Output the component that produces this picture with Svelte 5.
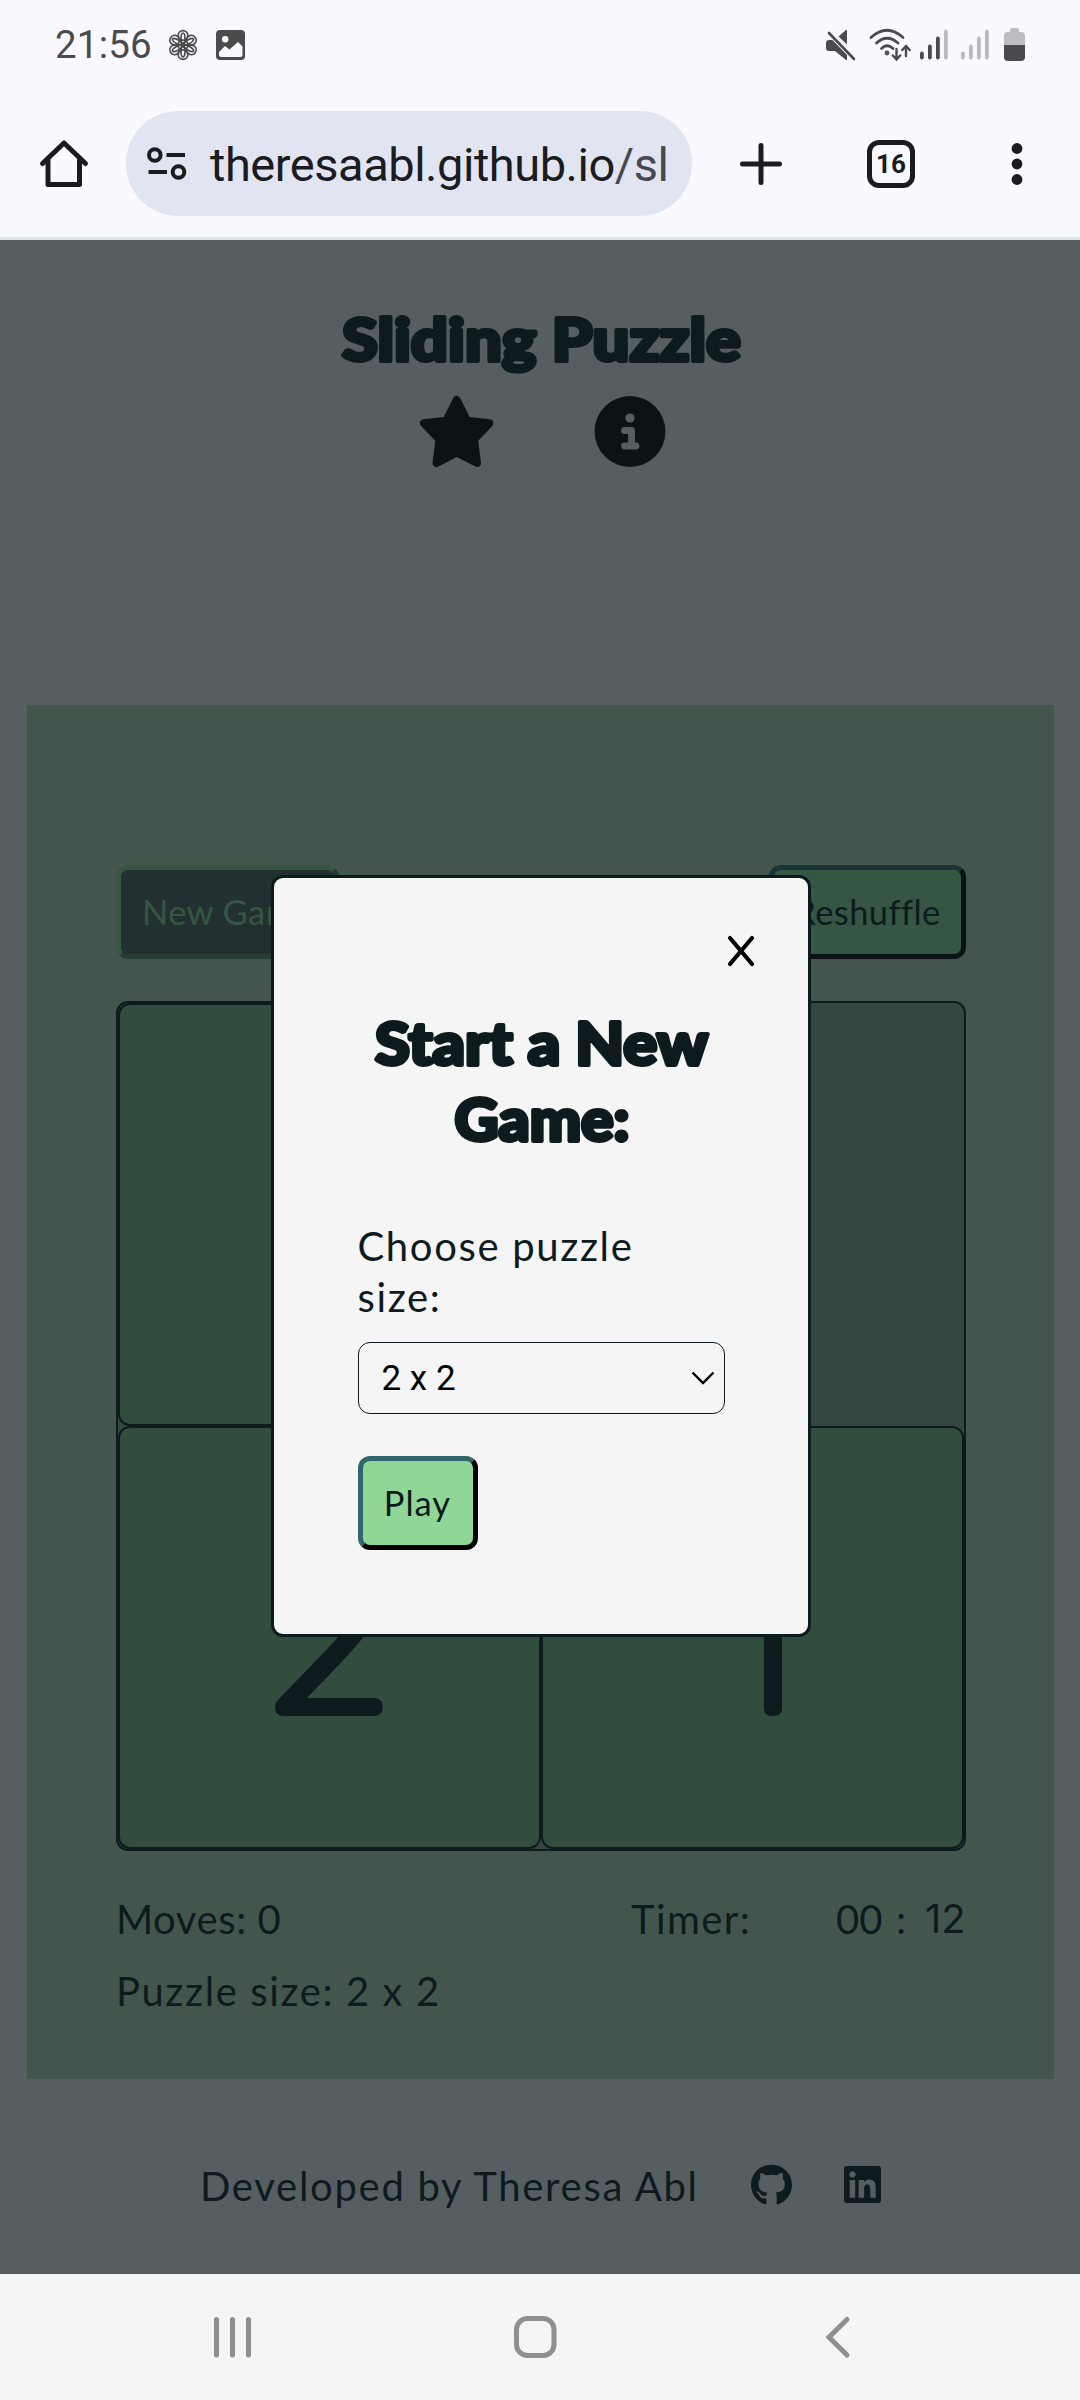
<script>
  const time = '21:56';
  const tiles = [
    { label: '', x: 209, stretch: 1 },
    null,
    { label: '2', x: 208.5, stretch: 1.14 },
    { label: '1', x: 219, stretch: 1 },
  ];
  const signalBars = [8, 15, 23, 30];
</script>

<div class="screen">
  <header class="status">
    <span class="clock">{time}</span>
    <svg class="flower" width="30" height="32" viewBox="-15 -16 30 32">
      {#each [0, 60, 120, 180, 240, 300] as angle}
        <g transform="rotate({angle})">
          <circle cx="0" cy="-9.6" r="4.8" />
          <ellipse cx="0" cy="-6" rx="2" ry="6" />
        </g>
      {/each}
    </svg>
    <svg class="photo" width="29" height="30" viewBox="0 0 29 30">
      <rect width="29" height="30" rx="4" fill="#4b4b4d" />
      <circle cx="9.2" cy="9.3" r="3.2" fill="#faf9ff" />
      <path d="M3 22l6-6 4.500 3.500 8.500-7.500 4.500 4.500V25q0 2-2 2H5q-2 0-2-2z" fill="#faf9ff" />
    </svg>
    <div class="indicators">
      <svg width="30" height="32" viewBox="0 0 30 32">
        <path d="M0 14q0-3 3-3h3.500L21 26v5h-1L9 22H3q-3 0-3-3zM12.500 7.500L20 1h1v14.500z" fill="#4b4b4d" />
        <path d="M3 4l25 26" stroke="#4b4b4d" stroke-width="2.600" stroke-linecap="round" />
      </svg>
      <svg width="43" height="33" viewBox="0 0 43 33" fill="none" stroke="#4b4b4d" stroke-width="2.800" stroke-linecap="round">
        <path d="M2 9.500Q18 -5 34 9.500M7.500 15Q18 5.500 29 15M12.500 20.500Q18 15 24 20.500" />
        <circle cx="18" cy="25" r="1" />
        <path d="M27.500 21v10M23.800 27.500l3.700 4 3.700-4M37 28V18.500M33.300 22l3.700-4 3.700 4" stroke-width="2.400" />
      </svg>
      <svg width="28" height="31" viewBox="0 0 28 31">
        {#each signalBars as h, i}
          <rect x={i * 8} y={30.5 - h} width="3.800" height={h} rx="1.900" fill={i < 3 ? '#4b4b4d' : '#bbbac0'} />
        {/each}
      </svg>
      <svg width="28" height="31" viewBox="0 0 28 31">
        {#each signalBars as h, i}
          <rect x={i * 8} y={30.5 - h} width="3.800" height={h} rx="1.900" fill="#bbbac0" />
        {/each}
      </svg>
      <svg width="21" height="33" viewBox="0 0 21 33">
        <path d="M0 17V8q0-4 4-4h2V2q0-2 2-2h5q2 0 2 2v2h2q4 0 4 4v9z" fill="#bdbcc2" />
        <path d="M0 17h21v12q0 4-4 4H4q-4 0-4-4z" fill="#4b4b4d" />
      </svg>
    </div>
  </header>

  <nav class="browser">
    <svg class="home" width="48" height="48" viewBox="0 0 48 48" fill="none" stroke="#1b1c20" stroke-width="5" stroke-linejoin="round" stroke-linecap="round">
      <path d="M2.500 23.500L24 3l21.500 20.500M8 20v24.500h31.500V20" />
    </svg>
    <div class="address">
      <svg width="40" height="34" viewBox="0 0 40 34" fill="none" stroke="#1b1c20" stroke-width="4">
        <circle cx="7.800" cy="8" r="5.800" /><path d="M19.500 8H38M1.500 25H20" />
        <circle cx="31.500" cy="25" r="5.800" />
      </svg>
      <span class="url">theresaabl.github.io<i>/sl</i></span>
    </div>
    <svg class="plus" width="42" height="42" viewBox="0 0 42 42" stroke="#1b1c20" stroke-width="5" stroke-linecap="round">
      <path d="M21 2.500v37M2.500 21h37" />
    </svg>
    <span class="tabs">16</span>
    <svg class="dots" width="12" height="44" viewBox="0 0 12 44" fill="#1b1c20">
      <circle cx="6" cy="6.500" r="5.400" /><circle cx="6" cy="22" r="5.400" /><circle cx="6" cy="37.500" r="5.400" />
    </svg>
  </nav>

  <main class="page">
    <div class="masthead">
      <svg class="title" width="420" height="80" viewBox="0 0 420 80" role="heading" aria-level="1">
        <text x="12" y="60" textLength="399" lengthAdjust="spacingAndGlyphs">Sliding Puzzle</text>
      </svg>
      <div class="actions">
        <svg width="74" height="72" viewBox="0 0 74 72">
          <path d="M36.700 4L47 24.600l22.300 2.600L54 43.500 57 67 36.700 56.500 16.500 67l3-23.500L4 27.200l22.500-2.600z" fill="#0a1316" stroke="#0a1316" stroke-width="8" stroke-linejoin="round" />
        </svg>
        <svg width="72" height="72" viewBox="0 0 72 72">
          <circle cx="36" cy="35.500" r="35.500" fill="#0a1316" />
          <circle cx="36" cy="22" r="4.600" fill="#565e61" />
          <path d="M30.500 34.500h7V50M30.500 50h11.500" fill="none" stroke="#565e61" stroke-width="6.800" stroke-linecap="round" stroke-linejoin="round" />
        </svg>
      </div>
    </div>

    <section class="game">
      <div class="controls">
        <button class="btn new">New Game</button>
        <button class="btn shuffle">Reshuffle</button>
      </div>
      <div class="board">
        {#each tiles as tile}
          {#if tile === null}
            <div></div>
          {:else}
            <div class="tile">
              {#if tile.label}
                <svg width="419" height="419" viewBox="0 0 419 419">
                  <text transform="translate({tile.x} 280.5) scale({tile.stretch} 1)" text-anchor="middle">{tile.label}</text>
                </svg>
              {/if}
            </div>
          {/if}
        {/each}
      </div>
      <div class="stats">
        <span class="moves">Moves: <b>0</b></span>
        <span class="timer">Timer:</span>
        <span class="minutes">00</span>
        <span class="colon">:</span>
        <span class="seconds">12</span>
      </div>
      <div class="size">Puzzle size: <b>2</b> x <b>2</b></div>
    </section>

    <footer>
      <span class="credit">Developed by Theresa Abl</span>
      <svg class="github" width="41" height="42" viewBox="0 0 496 512" preserveAspectRatio="none" fill="#0d1b1e">
        <path d="M244.800 8C106.100 8 0 113.300 0 252c0 110.900 69.800 205.800 169.500 239.200 12.800 2.300 17.300-5.600 17.300-12.100 0-6.200-.3-40.400-.3-61.400 0 0-70 15-84.700-29.800 0 0-11.400-29.100-27.800-36.600 0 0-22.900-15.700 1.600-15.400 0 0 24.900 2 38.600 25.800 21.900 38.600 58.600 27.500 72.900 20.900 2.300-16 8.800-27.100 16-33.700-55.900-6.200-112.300-14.300-112.300-110.500 0-27.500 7.600-41.300 23.600-58.900-2.600-6.500-11.100-33.300 2.600-67.900 20.900-6.500 69 27 69 27 20-5.600 41.500-8.500 62.800-8.500s42.800 2.900 62.800 8.500c0 0 48.100-33.600 69-27 13.700 34.700 5.200 61.400 2.600 67.900 16 17.700 25.800 31.500 25.800 58.900 0 96.500-58.900 104.200-114.800 110.500 9.200 7.900 17 22.900 17 46.400 0 33.700-.3 75.400-.3 83.600 0 6.500 4.600 14.400 17.300 12.100C428.200 457.800 496 362.900 496 252 496 113.300 383.500 8 244.800 8z" />
      </svg>
      <svg class="linkedin" width="37" height="37" viewBox="0 32 448 448" fill="#0d1b1e">
        <path d="M416 32H31.900C14.300 32 0 46.500 0 64.300v383.400C0 465.500 14.300 480 31.900 480H416c17.600 0 32-14.500 32-32.300V64.300c0-17.800-14.400-32.300-32-32.300zM135.400 416H69V202.200h66.500V416zm-33.200-243c-21.300 0-38.500-17.300-38.500-38.500S80.900 96 102.200 96c21.200 0 38.500 17.300 38.500 38.500 0 21.300-17.200 38.500-38.500 38.500zm282.100 243h-66.400V312c0-24.800-.5-56.700-34.500-56.700-34.600 0-39.900 27-39.900 54.900V416h-66.400V202.200h63.700v29.200h.9c8.900-16.800 30.600-34.500 62.200-34.500 66.500 0 79.900 43.800 79.900 100.900V416z" />
      </svg>
    </footer>

    <div class="modal" role="dialog">
      <button class="close" aria-label="Close">
        <svg width="28" height="32" viewBox="0 0 28 32" stroke="#000" stroke-width="4.200" stroke-linecap="round">
          <path d="M3 3l22 26M25 3L3 29" />
        </svg>
      </button>
      <svg class="title" width="367" height="170" viewBox="0 0 367 170" role="heading" aria-level="2">
        <text x="17" y="62" textLength="333" lengthAdjust="spacingAndGlyphs">Start a New</text>
        <text x="96.500" y="138" textLength="175" lengthAdjust="spacingAndGlyphs">Game:</text>
      </svg>
      <p class="prompt">Choose puzzle<br />size:</p>
      <div class="select">
        <span>2 x 2</span>
        <svg width="24" height="14" viewBox="0 0 24 14" fill="none" stroke="#000" stroke-width="2.400">
          <path d="M1.500 1.500L12 12 22.500 1.500" />
        </svg>
      </div>
      <button class="btn play">Play</button>
    </div>
  </main>

  <nav class="system">
    <svg width="40" height="44" viewBox="0 0 40 44" stroke="#8f8f8f" stroke-width="5" stroke-linecap="round">
      <path d="M3.500 4.500v35.500M19.500 4.500v35.500M35.500 4.500v35.500" />
    </svg>
    <svg class="home-key" width="44" height="44" viewBox="0 0 44 44" fill="none" stroke="#8f8f8f" stroke-width="5">
      <rect x="3.500" y="3.500" width="37.500" height="37" rx="11" />
    </svg>
    <svg width="26" height="44" viewBox="0 0 26 44" fill="none" stroke="#8f8f8f" stroke-width="5" stroke-linecap="round">
      <path d="M22 4.500L4 22.300 22 40" />
    </svg>
  </nav>
</div>

<style>
  .screen {
    width: 1080px;
    height: 2400px;
    overflow: hidden;
    display: flex;
    flex-direction: column;
    background: #faf9ff;
    font-family: Lato, 'Open Sans', sans-serif;
    color: #0d1b1e;
  }
  svg { display: block; flex: none; overflow: visible; }
  .status {
    height: 90px;
    box-sizing: border-box;
    padding: 0 55px;
    display: flex;
    align-items: center;
    font-family: Roboto, sans-serif;
  }
  .clock { width: 113px; font-size: 38.5px; letter-spacing: 0.2px; line-height: 44px; padding-bottom: 1px; color: #4b4b4d; }
  .flower { fill: none; stroke: #4b4b4d; stroke-width: 1.7; }
  .photo { margin-left: 18px; }
  .indicators { margin-left: auto; display: flex; align-items: center; gap: 13px; padding-bottom: 1px; }
  .indicators svg:nth-child(3) { margin-left: -5px; }
  .indicators svg:nth-child(5) { margin-left: 2px; }

  .browser {
    height: 150px;
    box-sizing: border-box;
    border-bottom: 3px solid #dfe3ec;
    display: flex;
    align-items: center;
    padding: 0 57px 0 40px;
    font-family: Roboto, sans-serif;
  }
  .address {
    width: 566px;
    height: 105px;
    margin-left: 38px;
    border-radius: 52px;
    background: #e1e5f1;
    box-sizing: border-box;
    padding-left: 21px;
    display: flex;
    align-items: center;
    gap: 23px;
  }
  .url { font-size: 47px; letter-spacing: -0.47px; padding-top: 2px; color: #1b1c20; white-space: nowrap; }
  .url i { font-style: normal; color: #47494f; }
  .plus { margin-left: 48px; }
  .tabs {
    width: 48px;
    height: 48px;
    margin-left: 85px;
    box-sizing: border-box;
    border: 5px solid #1b1c20;
    border-radius: 12px;
    font-size: 26px;
    font-weight: 700;
    line-height: 38px;
    text-align: center;
    color: #1b1c20;
  }
  .dots { margin-left: auto; }

  .page { position: relative; height: 2034px; background: #565e61; }
  .masthead {
    height: 465px;
    box-sizing: border-box;
    padding-top: 61px;
    display: flex;
    flex-direction: column;
    align-items: center;
  }
  .title text {
    font: 900 59px Lato, sans-serif;
    fill: #0d1b1e;
    stroke: #0d1b1e;
    stroke-width: 4px;
    stroke-linejoin: round;
  }
  .actions { display: flex; gap: 100px; margin: 15px 0 0 6px; }

  .game {
    margin: 0 26px 0 27px;
    height: 1374px;
    box-sizing: border-box;
    padding: 160px 88px 0 89px;
    background: #44554e;
  }
  .controls { display: flex; justify-content: space-between; width: 850px; height: 94px; }
  .btn {
    box-sizing: border-box;
    height: 94px;
    padding: 0;
    border: 5px solid;
    border-radius: 12px;
    font-family: Lato, sans-serif;
    font-size: 34.5px;
    letter-spacing: 0.4px;
    line-height: 82px;
    text-align: center;
    white-space: nowrap;
  }
  .new {
    width: 223px;
    background: #223031;
    color: #355642;
    border-color: #355642 #253d34 #253d34 #355642;
  }
  .shuffle {
    width: 197px;
    background: #355642;
    color: #0d1b1e;
    border-color: #1a3539 #0a1416 #0a1416 #1a3539;
  }
  .board {
    box-sizing: border-box;
    width: 850px;
    height: 850px;
    margin-top: 42px;
    border: 2px solid #0d1b1e;
    border-radius: 12px;
    background: #354641;
    display: grid;
    grid-template: 423px 423px / 423px 423px;
  }
  .tile {
    box-sizing: border-box;
    border: 2px solid #0d1b1e;
    border-radius: 12px;
    background: #314d3e;
  }
  .tile text {
    font: 100 183px Inter, sans-serif;
    fill: #0d1b1e;
    stroke: #0d1b1e;
    stroke-width: 14px;
    stroke-linejoin: round;
  }
  .stats, .size { font-size: 40px; line-height: 50px; white-space: pre; }
  .stats { display: flex; margin-top: 43px; }
  .stats b, .size b { font-weight: 400; }
  .moves { width: 515px; letter-spacing: 0.6px; }
  .timer { width: 205px; letter-spacing: 1.4px; }
  .minutes { width: 60px; }
  .colon { width: 29px; }
  .seconds { font-family: Inter, sans-serif; }
  .size { margin-top: 22px; letter-spacing: 1.6px; }

  footer { display: flex; align-items: center; height: 195px; padding: 16px 0 0 200px; box-sizing: border-box; }
  .credit { font-size: 40px; letter-spacing: 1.72px; width: 551px; padding-top: 2px; white-space: nowrap; }
  .linkedin { margin-left: 52px; }

  .modal {
    position: absolute;
    left: 271px;
    top: 635px;
    width: 540px;
    height: 762px;
    box-sizing: border-box;
    border: 3px solid #0d1b1e;
    border-radius: 12px;
    background: #f5f5f5;
    padding: 57px 83.5px 0;
    display: flex;
    flex-direction: column;
    align-items: flex-start;
  }
  .close { align-self: flex-end; margin-right: -30.500px; border: 0; padding: 0; background: none; height: 32px; }
  .modal .title { margin-top: 36px; }
  .prompt { margin: 48px 0 0; font-size: 40px; letter-spacing: 1.65px; line-height: 51px; white-space: nowrap; }
  .select {
    width: 367px;
    height: 72px;
    margin-top: 19px;
    box-sizing: border-box;
    border: 1px solid #0d1b1e;
    border-radius: 12px;
    padding: 0 9px 0 23px;
    display: flex;
    justify-content: space-between;
    align-items: center;
    font: 35px Roboto, sans-serif;
    color: #000;
  }
  .play {
    width: 120px;
    margin-top: 42px;
    letter-spacing: 1px;
    background: #90d797;
    color: #0d1b1e;
    border-color: #31666d #000 #000 #31666d;
  }

  .system {
    height: 126px;
    background: #f5f5f5;
    display: flex;
    align-items: center;
    justify-content: space-between;
    padding: 0 229px 0 213px;
  }
  .home-key { margin-right: 8px; }
</style>
